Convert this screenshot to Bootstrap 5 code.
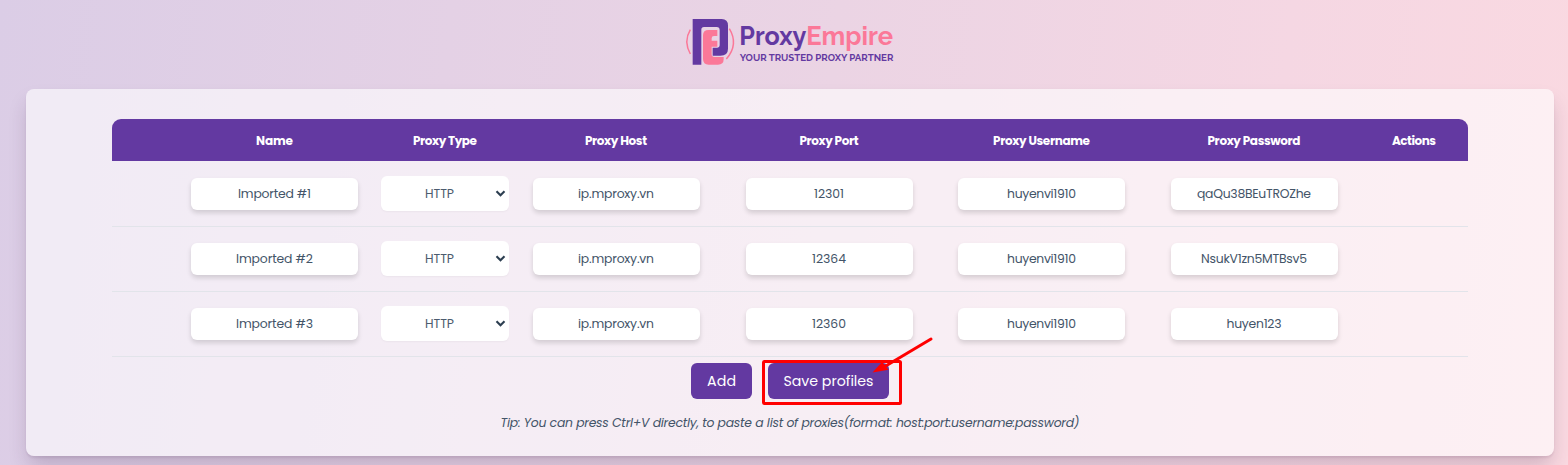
<!DOCTYPE html>
<html lang="en">
<head>
<meta charset="utf-8">
<meta name="viewport" content="width=device-width, initial-scale=1">
<title>ProxyEmpire</title>
<link href="https://cdn.jsdelivr.net/npm/bootstrap@5.3.0/dist/css/bootstrap.min.css" rel="stylesheet">
<style>
body{height:465px;overflow:hidden;font-family:Poppins,"Inter",sans-serif;color:#34495e;background:linear-gradient(96deg,#dbcde6 0%,#e4d1e5 28%,#ebd4e4 52%,#f5d7e3 80%,#fad9e1 100%)}
.brand-bar{height:89px}
.brand-logo{width:230px;height:66px;margin:8px 0 0 676px;display:block}
.panel{margin:0 14px 0 26px;height:367px;padding:30px 86px 0;border-radius:8px;background:rgba(255,255,255,.6);position:relative}
.panel-shadow{box-shadow:0 12px 20px -3px rgba(60,30,70,.22),0 2px 2px rgba(60,30,70,.08)}
.proxies{display:grid;grid-template-columns:56px 213px 128px 214px 212px 213px 212px 108px;align-items:center;justify-items:center}
.proxies-head{height:42px;margin-bottom:1px;padding-top:1px;background:#6339a1;color:#fff;font-weight:700;font-size:12px;border-radius:9px 9px 0 0}
.proxies-row{height:65px;border-bottom:1px solid #e2e4ea;font-size:12.4px}
.field{width:167px;height:32px;border:0;border-radius:6px;background:#fff;text-align:center;color:#435468;box-shadow:0 3px 5px rgba(0,0,0,.14);padding:0}
.picker{width:128px;height:35px;margin-bottom:1px;border-radius:6px;background:#fff;color:#4c5b6e;position:relative;box-shadow:0 1px 2px rgba(0,0,0,.04);padding:1px 11px 0 0}
.picker svg{position:absolute;right:3px;top:13px}
.btn-brand{--bs-btn-color:#fff;--bs-btn-bg:#6339a1;--bs-btn-hover-color:#fff;--bs-btn-hover-bg:#532d8c;height:36px;border:0;border-radius:6px;font-size:14.2px;padding:0;line-height:36px}
.add{width:61px}.save{width:121px}
.actions-bar{gap:16px;margin-top:6px}
.tip{font-style:italic;font-size:12.4px;color:#435468;line-height:20px;margin:14px 0 0;white-space:nowrap}
.callout{position:absolute;left:736px;top:246px;width:176px;height:72px;pointer-events:none}
.fit{white-space:nowrap;display:inline-block}
</style>
</head>
<body>
<header class="brand-bar overflow-hidden">
<svg class="brand-logo" viewBox="0 0 690 198" role="img" aria-label="ProxyEmpire">
<g fill="none" stroke="#fb7898" stroke-width="4.5"><path d="M43 65Q22 100 43 138M160 62Q189 110 151 153"/></g>
<path fill="#6339a1" d="M50 33H137Q156 33 156 53V122Q156 143 133 143H110V119H124Q131 119 131 112V67Q131 57 122 57H84Q76 57 76 65V170H50Z"/>
<path fill="#fb7898" d="M81 82Q81 66 98 66H124V84H114Q107 84 107 91V98H124V116H107V139Q107 147 115 147H143V154Q143 170 126 170H98Q81 170 81 153Z"/>
<g font-family="Raleway,Lato,sans-serif" font-weight="700"><text x="190" y="111" font-size="76" fill="#6339a1" textLength="201" lengthAdjust="spacingAndGlyphs">Proxy</text><text x="391" y="111" font-size="76" fill="#fb7898" textLength="260" lengthAdjust="spacingAndGlyphs">Empire</text><text x="191" y="159" font-size="30" fill="#6339a1" textLength="461" lengthAdjust="spacingAndGlyphs">YOUR TRUSTED PROXY PARTNER</text></g>
</svg>
</header>
<main class="panel panel-shadow">
<div class="proxies proxies-head"><span></span><span class="fit" data-w="37">Name</span><span class="fit" data-w="64">Proxy Type</span><span class="fit" data-w="62">Proxy Host</span><span class="fit" data-w="59">Proxy Port</span><span class="fit" data-w="97">Proxy Username</span><span class="fit" data-w="93">Proxy Password</span><span class="fit" data-w="44">Actions</span></div>
<div id="rows"></div>
<div class="actions-bar d-flex justify-content-center">
<button class="btn btn-brand add"><span class="fit" data-w="29">Add</span></button>
<button class="btn btn-brand save"><span class="fit" data-w="90">Save profiles</span></button>
</div>
<p class="tip text-center"><span class="fit" data-w="579">Tip: You can press Ctrl+V directly, to paste a list of proxies(format: host:port:username:password)</span></p>
<svg class="callout" viewBox="0 0 176 72"><rect x="1.5" y="26.5" width="137" height="42" rx="1" fill="none" stroke="#f00" stroke-width="3"/><path d="M169 4L122 32" stroke="#f00" stroke-width="3" stroke-linecap="round"/><path d="M110.5 37.5L120 27L126.5 34.8Z" fill="#f00"/></svg>
</main>
<script>
const data = [
  [['Imported #1',73],['ip.mproxy.vn',76],['12301',30],['huyenvi1910',69],['qaQu38BEuTROZhe',114]],
  [['Imported #2',77],['ip.mproxy.vn',76],['12364',34],['huyenvi1910',69],['NsukV1zn5MTBsv5',106]],
  [['Imported #3',77],['ip.mproxy.vn',76],['12360',34],['huyenvi1910',69],['huyen123',55]]
];
const field = ([t, w]) => `<div class="field d-flex align-items-center justify-content-center"><span class="fit" data-w="${w}">${t}</span></div>`;
const picker = `<div class="picker d-flex align-items-center justify-content-center"><span class="fit" data-w="29">HTTP</span><svg width="11" height="9" viewBox="0 0 11 9"><path d="M1.5 2.2L5.5 6.2L9.5 2.2" fill="none" stroke="#2c3e50" stroke-width="2.1"/></svg></div>`;
document.getElementById('rows').innerHTML = data.map(r => `<div class="proxies proxies-row"><span></span>${field(r[0])}${picker}${r.slice(1).map(field).join('')}<span></span></div>`).join('');
// Even out label widths through letter spacing
document.querySelectorAll('.fit').forEach(e => {
  const n = e.textContent.length, s = (e.dataset.w - e.getBoundingClientRect().width) / (n - 1);
  e.style.letterSpacing = s + 'px';
  e.style.marginRight = -s + 'px';
});
</script>
<script src="https://cdn.jsdelivr.net/npm/bootstrap@5.3.0/dist/js/bootstrap.bundle.min.js"></script>
</body>
</html>
